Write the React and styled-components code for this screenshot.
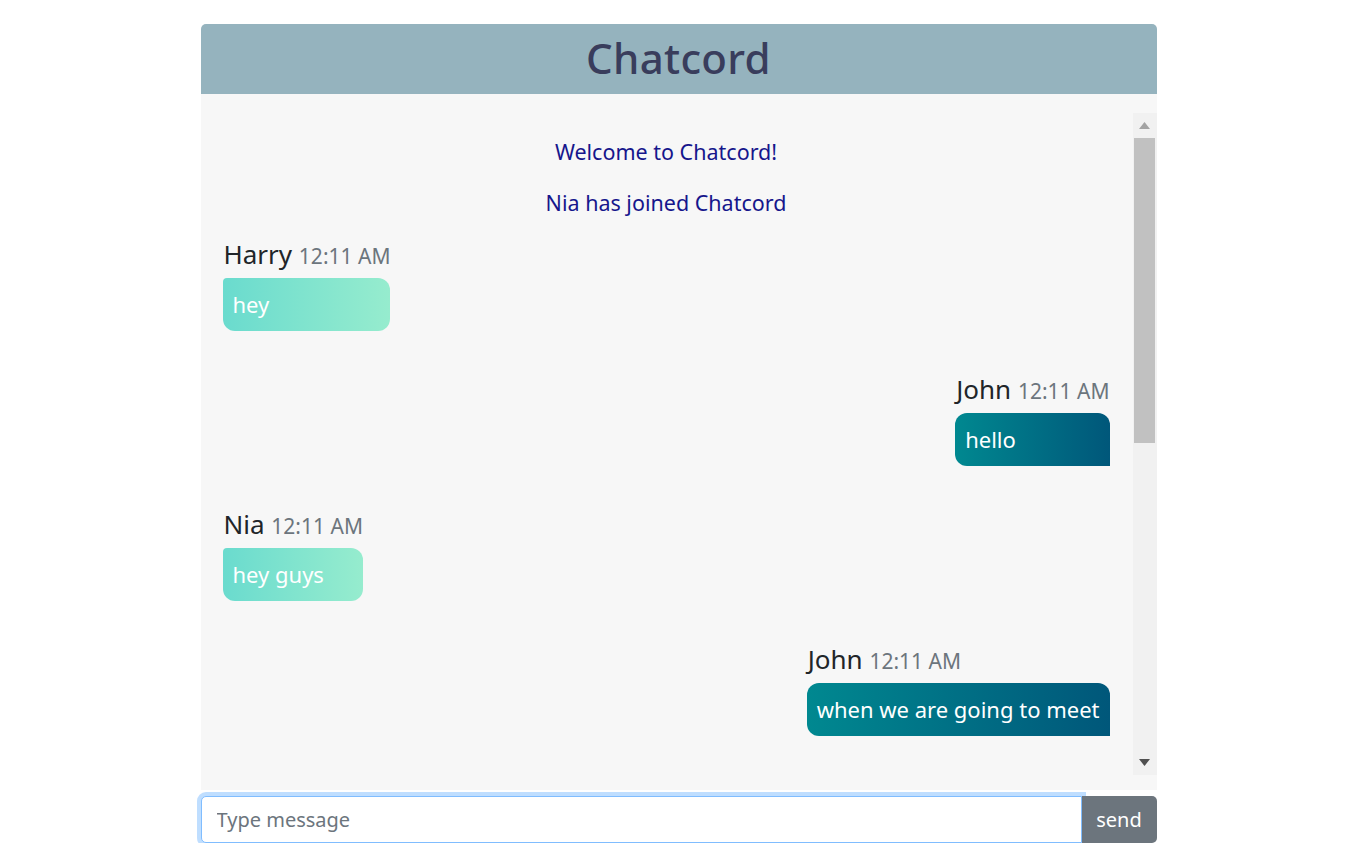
import React from "react";
import styled, { createGlobalStyle } from "styled-components";

const GlobalStyle = createGlobalStyle`
  body {
    margin: 0;
    background: #fff;
    font-family: "Noto Sans", "Open Sans", sans-serif;
    color: #212529;
  }
`;

const Container = styled.div`
  width: 956px;
  margin: 24px 0 0 calc(50% - 481px);
`;

const Header = styled.header`
  height: 70px;
  background: #95b3be;
  border-radius: 5px 5px 0 0;
  display: flex;
  align-items: center;
  justify-content: center;
  padding-bottom: 4px;
  box-sizing: border-box;

  h1 {
    margin: 0;
    font-size: 42px;
    font-weight: 500;
    color: #393d5c;
    letter-spacing: 0.3px;
  }
`;

const Main = styled.main`
  display: flex;
  background: #f7f7f7;
  padding: 19px 0 15px;
`;

const Messages = styled.div`
  flex: 1;
  height: 662px;
  overflow: hidden;
  padding: 24px 23px 0 22px;
  box-sizing: border-box;
`;

const ScrollTrack = styled.div`
  width: 24px;
  height: 662px;
  background: #f1f1f1;
  display: flex;
  flex-direction: column;
`;

const ScrollButton = styled.div`
  height: 25px;
  display: flex;
  align-items: center;
  justify-content: center;
`;

const ScrollThumb = styled.div`
  height: 305px;
  margin: 0 2px 0 1px;
  background: #c1c1c1;
`;

const ScrollSpace = styled.div`
  flex: 1;
`;

const Notice = styled.p`
  margin: 0 0 21px;
  text-align: center;
  font-size: 21.5px;
  line-height: 30px;
  color: #16168c;

  &:last-of-type {
    margin-bottom: 19px;
  }
`;

const Row = styled.div`
  display: flex;
  justify-content: ${(p) => (p.$own ? "flex-end" : "flex-start")};
  margin-bottom: 41px;
`;

const Message = styled.div`
  display: inline-flex;
  flex-direction: column;
`;

const Meta = styled.div`
  font-size: 26px;
  line-height: 34px;
  margin: 0 0 5px 1px;
  color: #212529;
  white-space: nowrap;

  span {
    font-size: 21px;
    color: #6c757d;
  }
`;

const Bubble = styled.div`
  padding: 10px 10px;
  font-size: 22px;
  line-height: 33px;
  color: #fff;
  white-space: nowrap;
  border-radius: ${(p) => (p.$own ? "12px 12px 0 12px" : "4px 12px 12px 12px")};
  background: ${(p) =>
    p.$own
      ? "linear-gradient(to right, #008890, #00577a)"
      : "linear-gradient(to right, #6adbce, #96ecce)"};
`;

const InputRow = styled.form`
  display: flex;
  margin-top: 6px;
`;

const Input = styled.input`
  flex: 1;
  height: 47px;
  box-sizing: border-box;
  padding: 6px 15px;
  font-family: inherit;
  font-size: 20px;
  color: #495057;
  border: 1px solid #80bdff;
  border-radius: 5px 0 0 5px;
  box-shadow: 0 0 0 4px rgba(0, 123, 255, 0.25);
  outline: none;

  &::placeholder {
    color: #6c757d;
  }
`;

const SendButton = styled.button`
  width: 75px;
  height: 47px;
  border: none;
  border-radius: 0 5px 5px 0;
  background: #6c757d;
  color: #fff;
  font-family: inherit;
  font-size: 20px;
`;

const chat = [
  { user: "Harry", text: "hey" },
  { user: "John", text: "hello", own: true },
  { user: "Nia", text: "hey guys" },
  { user: "John", text: "when we are going to meet", own: true },
];

export default function App() {
  return (
    <>
      <GlobalStyle />
      <Container>
        <Header>
          <h1>Chatcord</h1>
        </Header>
        <Main>
          <Messages>
            <Notice>Welcome to Chatcord!</Notice>
            <Notice>Nia has joined Chatcord</Notice>
            {chat.map((m, i) => (
              <Row key={i} $own={m.own}>
                <Message>
                  <Meta>
                    {m.user} <span>12:11 AM</span>
                  </Meta>
                  <Bubble $own={m.own}>{m.text}</Bubble>
                </Message>
              </Row>
            ))}
          </Messages>
          <ScrollTrack>
            <ScrollButton>
              <svg width="11" height="7" viewBox="0 0 11 7">
                <polygon points="5.5,0 11,7 0,7" fill="#a3a3a3" />
              </svg>
            </ScrollButton>
            <ScrollThumb />
            <ScrollSpace />
            <ScrollButton>
              <svg width="11" height="7" viewBox="0 0 11 7">
                <polygon points="0,0 11,0 5.5,7" fill="#505050" />
              </svg>
            </ScrollButton>
          </ScrollTrack>
        </Main>
        <InputRow onSubmit={(e) => e.preventDefault()}>
          <Input type="text" placeholder="Type message" />
          <SendButton type="submit">send</SendButton>
        </InputRow>
      </Container>
    </>
  );
}
